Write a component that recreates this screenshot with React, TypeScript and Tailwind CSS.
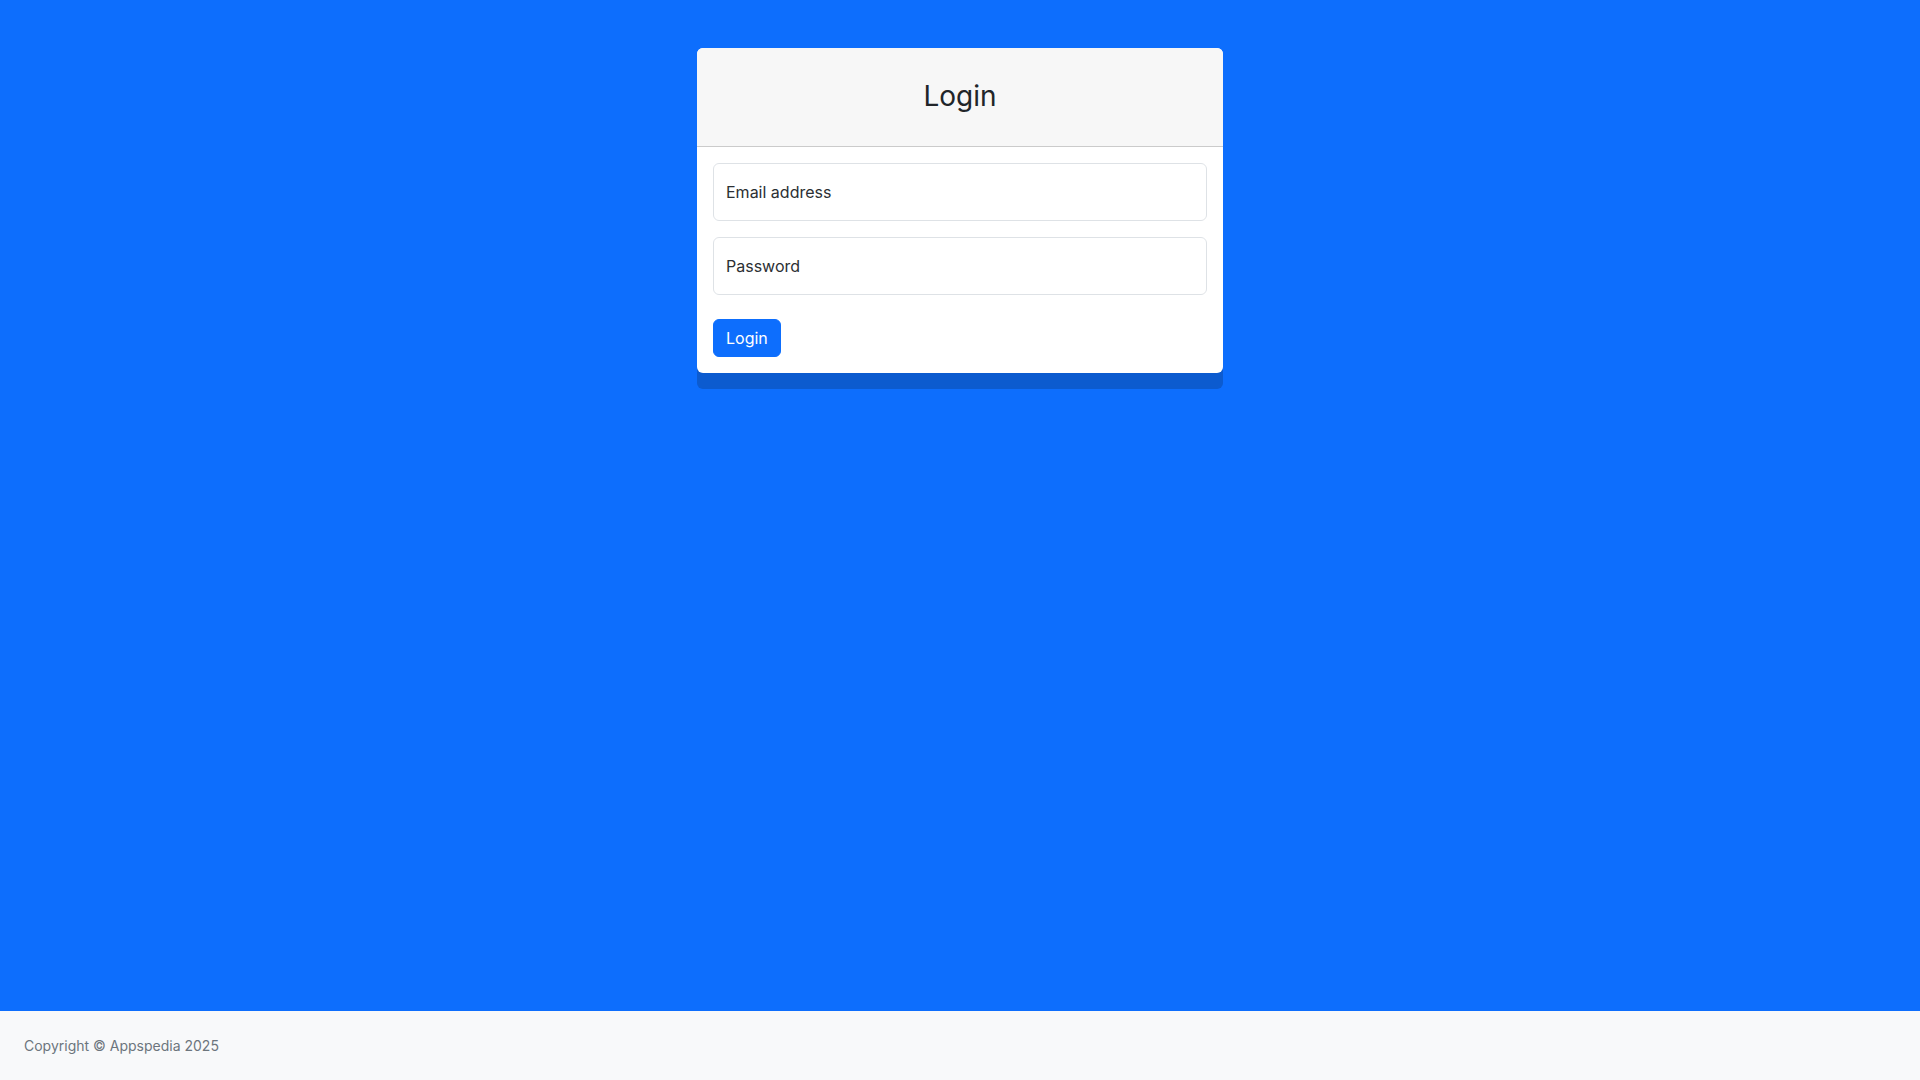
import React from "react";

export default function App() {
  return (
    <div className="min-h-screen flex flex-col bg-[#0d6efd] font-['Inter','Liberation_Sans',sans-serif] text-[#212529]">
      <main className="flex-1">
        <div className="w-[526px] mx-auto mt-12">
          <div className="relative z-10 rounded-[6px] overflow-hidden bg-white">
            <div className="bg-[#f7f7f7] px-4 py-2 border-b border-black/[.175]">
              <h3 className="my-6 text-center text-[28px] leading-[1.2] font-normal text-[#212529]">Login</h3>
            </div>
            <form className="p-4" onSubmit={(e) => e.preventDefault()}>
              <div className="h-[58px] border border-[#dee2e6] rounded-[6px] flex items-center px-3 mb-4">
                <span className="text-base leading-6 text-[#2b2f33]">Email address</span>
              </div>
              <div className="h-[58px] border border-[#dee2e6] rounded-[6px] flex items-center px-3">
                <span className="text-base leading-6 text-[#2b2f33]">Password</span>
              </div>
              <div className="mt-6 flex items-center justify-between">
                <button
                  type="submit"
                  className="h-[38px] px-3 rounded-[6px] border border-[#0d6efd] bg-[#0d6efd] text-white text-base leading-6"
                >
                  Login
                </button>
              </div>
            </form>
          </div>
          <div className="-mt-[6px] h-[22px] rounded-b-[6px] bg-[#0c5bcf]" />
        </div>
      </main>
      <footer className="bg-[#f8f9fa] px-6 py-6">
        <div className="text-sm leading-[21px] text-[#6c757d]">Copyright © Appspedia 2025</div>
      </footer>
    </div>
  );
}
